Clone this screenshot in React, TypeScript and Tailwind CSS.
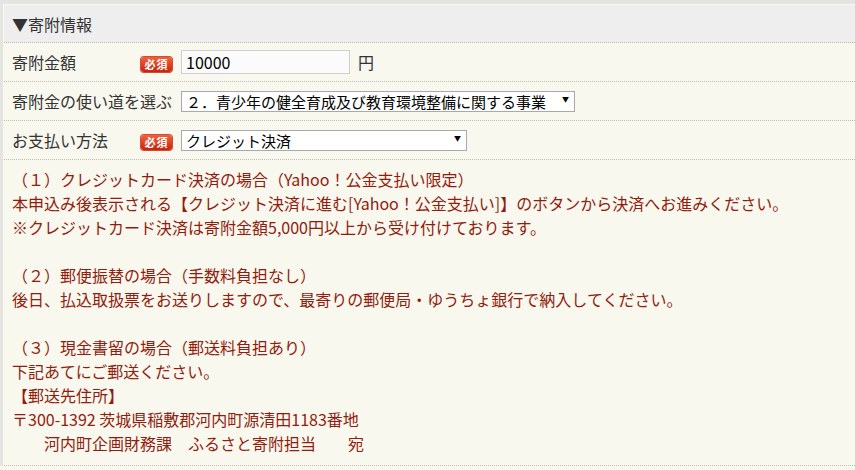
import React from 'react';

const font = { fontFamily: '"Noto Sans CJK JP", "Noto Sans", sans-serif' };

function Required() {
  return (
    <span className="inline-flex items-center justify-center w-[31px] h-[15px] rounded-[3px] bg-gradient-to-b from-[#f0603c] to-[#c8200c] text-white text-[11px] font-bold leading-none tracking-[1px] shadow-[0_0_0_1px_#d84a30]">
      必須
    </span>
  );
}

function Select({ value, width }: { value: string; width: string }) {
  return (
    <div className={`relative ${width}`}>
      <select
        defaultValue={value}
        className="appearance-none w-full h-[21px] bg-white border border-[#a9a9a9] pl-[4px] pr-[16px] text-[15px] leading-[19px] text-black outline-none"
        style={font}
      >
        <option value={value}>{value}</option>
      </select>
      <span className="pointer-events-none absolute right-[6px] top-[5px] text-[7px] leading-[10px] text-black">▼</span>
    </div>
  );
}

const lines = [
  '（１）クレジットカード決済の場合（Yahoo！公金支払い限定）',
  '本申込み後表示される【クレジット決済に進む[Yahoo！公金支払い]】のボタンから決済へお進みください。',
  '※クレジットカード決済は寄附金額5,000円以上から受け付けております。',
  '',
  '（２）郵便振替の場合（手数料負担なし）',
  '後日、払込取扱票をお送りしますので、最寄りの郵便局・ゆうちょ銀行で納入してください。',
  '',
  '（３）現金書留の場合（郵送料負担あり）',
  '下記あてにご郵送ください。',
  '【郵送先住所】',
  '〒300-1392 茨城県稲敷郡河内町源清田1183番地',
  '　　河内町企画財務課　ふるさと寄附担当　　宛',
];

export default function App() {
  return (
    <div className="w-[855px] h-[470px] overflow-hidden bg-[#f9f8ef] text-[#333] text-[16px]" style={font}>
      <div className="border-t-[4px] border-l-[3px] border-[#e4e4e0] pt-px pl-px">
        {/* header */}
        <div className="h-[38px] bg-[#eeeeee] flex items-center pl-[8px] border-b border-dotted border-[#bdbdb8]">
          <span className="text-[16px] text-[#333]">▼寄附情報</span>
        </div>

        {/* amount */}
        <div className="h-[39px] flex items-center pl-[8px] border-b border-dotted border-[#bdbdb8]">
          <span className="w-[129px]">寄附金額</span>
          <span className="w-[40px]"><Required /></span>
          <input
            defaultValue="10000"
            className="w-[169px] h-[24px] bg-[#fbfbfb] border border-[#cfcfcf] px-[4px] text-[16px] text-black outline-none"
            style={font}
          />
          <span className="ml-[8px] text-[#333]">円</span>
        </div>

        {/* usage */}
        <div className="h-[39px] flex items-center pl-[8px] border-b border-dotted border-[#bdbdb8]">
          <span className="w-[169px]">寄附金の使い道を選ぶ</span>
          <Select value="２．青少年の健全育成及び教育環境整備に関する事業" width="w-[394px]" />
        </div>

        {/* payment */}
        <div className="h-[39px] flex items-center pl-[8px] border-b border-dotted border-[#bdbdb8]">
          <span className="w-[129px]">お支払い方法</span>
          <span className="w-[40px]"><Required /></span>
          <Select value="クレジット決済" width="w-[286px]" />
        </div>

        {/* notes */}
        <div className="pt-[7px] pb-[10px] pl-[8px] border-b border-dotted border-[#bdbdb8] text-[#931c0e] leading-[24px]">
          {lines.map((l, i) => (
            <div key={i} className="h-[24px] whitespace-pre">{l}</div>
          ))}
        </div>
      </div>
    </div>
  );
}
